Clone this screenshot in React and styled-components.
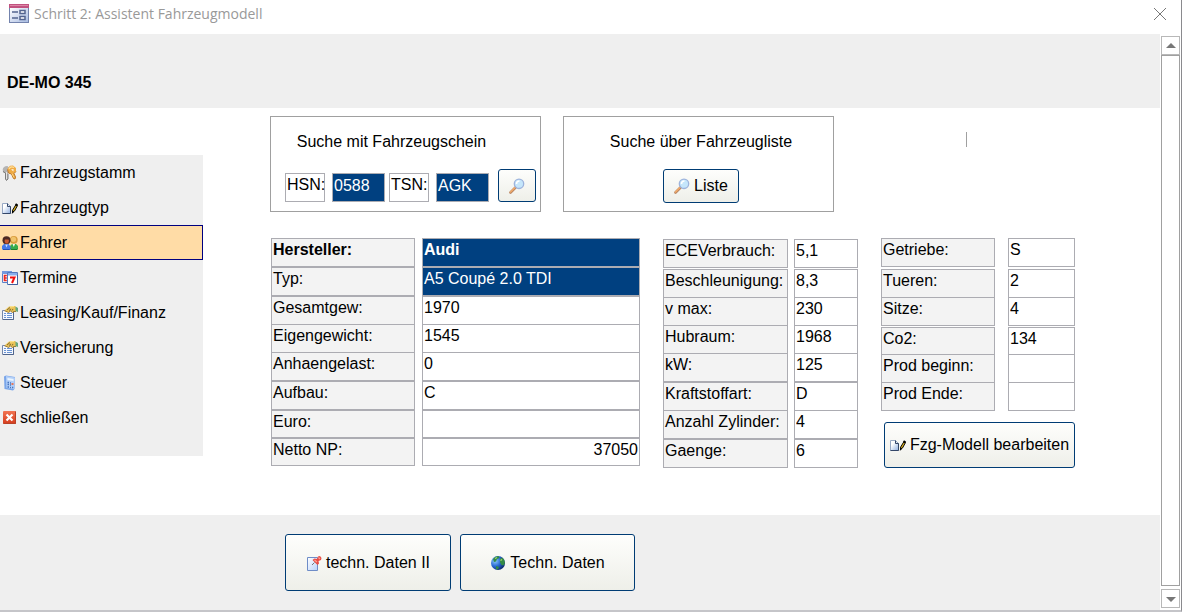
import React from 'react';
import styled, { createGlobalStyle, css } from 'styled-components';

const GlobalStyle = createGlobalStyle`
  *, *::before, *::after {
    box-sizing: border-box;
  }

  body {
    margin: 0;
    background: #ffffff;
    color: #000000;
    font: 16px/20px "Liberation Sans", Arial, sans-serif;
  }

  button, input {
    font: inherit;
    color: inherit;
  }
`;

const Window = styled.div`
  display: flex;
  flex-direction: column;
  min-height: 100vh;
  border-right: 1px solid #8a8a8e;
  border-bottom: 2px solid #c5c5c9;
`;

const TitleBar = styled.header`
  display: flex;
  align-items: center;
  height: 34px;
  padding: 0 14px 6px 9px;
  color: #999999;
  font: 14px/20px "Open Sans", "Noto Sans", sans-serif;
`;

const Title = styled.span`
  flex: 1;
  margin-left: 5px;
`;

const CloseButton = styled.button`
  display: flex;
  padding: 0;
  border: 0;
  background: none;
`;

const Viewport = styled.div`
  display: flex;
  flex: 1;
`;

const Page = styled.div`
  display: flex;
  flex: 1;
  flex-direction: column;
`;

const PageHeader = styled.div`
  height: 74px;
  padding: 39px 7px 0;
  background: #efefef;
`;

const Plate = styled.h1`
  margin: 0;
  font-size: 16px;
  line-height: 20px;
`;

const PageBody = styled.div`
  display: flex;
  align-items: flex-start;
  gap: 67px;
  padding-bottom: 47px;
`;

const Sidebar = styled.nav`
  flex: none;
  width: 203px;
  margin-top: 47px;
  padding-bottom: 21px;
  background: #efefef;
`;

const NavItem = styled.button`
  display: flex;
  align-items: center;
  gap: 2px;
  width: 100%;
  height: 35px;
  padding: 0 2px;
  border: 1px solid ${({ $active }) => ($active ? '#000080' : 'transparent')};
  border-left: 0;
  background: ${({ $active }) => ($active ? '#ffdca6' : 'transparent')};
  text-align: left;
`;

const Content = styled.main`
  flex: 1;
  padding-top: 8px;
`;

const SearchRow = styled.div`
  display: flex;
  gap: 22px;
`;

const SearchBox = styled.section`
  display: flex;
  flex-direction: column;
  width: 271px;
  height: 96px;
  padding: 15px 4px 0 ${({ $indent }) => $indent}px;
  border: 1px solid #a0a0a0;
`;

const SearchTitle = styled.h2`
  margin: 0;
  padding-right: ${({ $shift }) => ($shift ? '38px' : '0')};
  font-size: 16px;
  font-weight: normal;
  text-align: center;
`;

const SearchFields = styled.div`
  display: flex;
  align-items: flex-end;
  justify-content: ${({ $center }) => ($center ? 'center' : 'space-between')};
  margin-top: 17px;
`;

const FieldGroup = styled.div`
  display: flex;
  gap: 4px;
`;

const FieldPair = styled.div`
  display: flex;
  gap: 7px;
`;

const fieldBox = css`
  height: 29px;
  padding: 0 1px 4px;
  border: 1px solid #acacb2;
`;

const SearchLabel = styled.label`
  ${fieldBox}
  width: 40px;
  line-height: 22px;
`;

const SearchInput = styled.input`
  ${fieldBox}
  width: 53px;
  background: #004080;
  color: #ffffff;
`;

const Divider = styled.div`
  width: 1px;
  height: 15px;
  margin: 16px 0 0 110px;
  background: #a0a0a0;
`;

const ActionButton = styled.button`
  display: flex;
  align-items: center;
  justify-content: center;
  gap: 4px;
  width: ${({ $width }) => $width}px;
  height: ${({ $height }) => $height}px;
  padding: 0;
  border: 1px solid #003c74;
  border-radius: 3px;
  background: linear-gradient(#fefefc, #eeefe9);
  white-space: nowrap;
`;

const Specs = styled.div`
  display: flex;
  gap: 23px;
  margin-top: 26px;
  padding-left: 1px;
`;

const SpecColumn = styled.div`
  display: flex;
  flex-direction: column;
`;

const SpecRow = styled.div`
  display: grid;
  grid-template-columns: ${({ $columns }) => $columns};
  column-gap: ${({ $gap }) => $gap}px;
  height: ${({ $short }) => ($short ? 28 : 29)}px;
  margin-top: ${({ $space }) => $space}px;
  font-weight: ${({ $bold }) => ($bold ? 'bold' : 'normal')};
`;

const SpecLabel = styled.label`
  padding: 0 1px;
  border: 1px solid #acacb2;
  background: #f3f3f3;
  line-height: 22px;
  white-space: nowrap;
`;

const SpecInput = styled.input`
  width: 100%;
  min-width: 0;
  height: 100%;
  padding: 0 1px 5px;
  border: 1px solid #acacb2;
  background: ${({ $marked }) => ($marked ? '#004080' : '#ffffff')};
  color: ${({ $marked }) => ($marked ? '#ffffff' : '#000000')};
  font-weight: inherit;
  text-align: ${({ $right }) => ($right ? 'right' : 'left')};
`;

const EditAction = styled.div`
  display: flex;
  justify-content: flex-end;
  margin-top: 11px;
`;

const PageFooter = styled.footer`
  display: flex;
  flex: 1;
  align-items: flex-start;
  gap: 9px;
  padding: 19px 285px;
  background: #efefef;
`;

const ScrollBar = styled.div`
  display: flex;
  flex: none;
  flex-direction: column;
  width: 21px;
  padding: 2px 1px;
`;

const ScrollButton = styled.button`
  display: flex;
  align-items: center;
  justify-content: center;
  height: 19px;
  padding: 0;
  border: 1px solid #b8b8b8;
  background: #ffffff;
`;

const ScrollThumb = styled.div`
  flex: 1;
  margin-bottom: 3px;
  border: 1px solid #a0a0a0;
`;

const Icon = ({ size = 16, children }) => (
  <svg width={size} height={size} viewBox={`0 0 ${size} ${size}`} aria-hidden="true">
    {children}
  </svg>
);

const FormIcon = () => (
  <Icon size={20}>
    <defs>
      <linearGradient id="formBody" x1="0" y1="0" x2="1" y2="1">
        <stop offset="0" stopColor="#ffffff" />
        <stop offset="1" stopColor="#a9bce2" />
      </linearGradient>
    </defs>
    <path d="M0 0h20v19H0z" fill="#7383ad" />
    <path d="M1 4h18v14H1z" fill="url(#formBody)" />
    <path d="M0 0h20v4H0z" fill="#c2527f" />
    <path d="M1 1h18v1H1z" fill="#dc86a6" />
    <path d="M3 8h6M3 14h6" stroke="#53648f" strokeWidth="1.5" />
    <path d="M11 6.5h5v3h-5zM11 12.5h5v3h-5z" fill="#ffffff" stroke="#53648f" strokeWidth="1.5" />
  </Icon>
);

const KeysIcon = () => (
  <Icon>
    <path d="M.7 4.500C1 2 3 .8 5.500 1L7 3v4L6 9v5l-1.500 1.500L3.500 14V8.500L1 7z" fill="#b4b4b4" />
    <path d="M1 6.500 3.500 8v6l1 1.500L6 14V9" fill="none" stroke="#7c7c7c" />
    <path d="M4.500 7v7" stroke="#e4e4e4" />
    <path d="M5.500 3.500 8 .8l3-.3 3 2.500v3.500L12 8.500l1.500 3.500-.5 2-1.500-.5-2-4.500-3-1z" fill="#efab45" />
    <path d="m5.500 4.500 1 3.500 3 1 2 4.500 1.500.5.5-2L12 8.500l2-2" fill="none" stroke="#bd782b" />
    <path d="M7 4c1-2 3-2.500 5-1.500" fill="none" stroke="#ffdf9b" strokeWidth="1.300" />
    <path d="M9 4.500 11.500 4v2.500z" fill="#fff6e4" />
    <path d="m10 8.500 2 4" stroke="#ffd27c" />
  </Icon>
);

const EditIcon = () => (
  <Icon>
    <defs>
      <linearGradient id="editPage" x1="0" y1="0" x2="1" y2="1">
        <stop offset="0.300" stopColor="#ffffff" />
        <stop offset="1" stopColor="#8eaee0" />
      </linearGradient>
    </defs>
    <path d="M.5 3.500h5l3 3v7h-8z" fill="url(#editPage)" stroke="#97a8c4" />
    <path d="M5.500 3.500v3h3v7h-8" fill="none" stroke="#334668" />
    <path d="m10.500 12.500.2-2.500L14 4.500l1.500 1L12.500 11z" fill="#e5b91e" stroke="#000000" />
    <path d="m9.800 14 .5-3.500 2 1z" fill="#000000" />
    <path d="m13.500 4.200 2 1.200" stroke="#000000" strokeWidth="2" />
  </Icon>
);

const UsersIcon = () => (
  <Icon>
    <path d="M8 14.500V11l2-2h4l2 2v3l-1 1H9z" fill="#37ab4b" />
    <path d="M9 14.500h6l.7-1" fill="none" stroke="#1f7c31" />
    <circle cx="11.800" cy="4.800" r="3.900" fill="#d99c3d" />
    <circle cx="11.500" cy="4.300" r="2.600" fill="#f1c36b" />
    <path d="m10.500 9 1.300 3L13 9z" fill="#f1fff2" />
    <path d="M0 14v-3l2-2h4.500l2 2.500V14l-1 1H1z" fill="#4478e8" />
    <path d="M1 14.500h6.500l1-1" fill="none" stroke="#274eae" />
    <circle cx="4.500" cy="5.300" r="4" fill="#4b2923" />
    <path d="M3 4.500h3.500L7 6 6 8.500H3.500L2.500 6z" fill="#cb5a30" />
    <path d="m3.200 9.500 1.300 3 1.300-3z" fill="#c8dcff" />
  </Icon>
);

const CalendarIcon = () => (
  <Icon>
    <path d="M.5 1.500h9v11h-9z" fill="#f8fbff" stroke="#5b80c7" />
    <path d="M0 1h10v3H0z" fill="#7399df" />
    <path d="M4.800 5.500H2.500v2.500h2.300M2.500 8v2.500h2.300" fill="none" stroke="#ee2920" strokeWidth="1.600" />
    <path d="M5.500 2.500h10v12h-10z" fill="#ffffff" stroke="#5578bd" />
    <path d="M6 3h9v2.500H6z" fill="#88aeec" />
    <path d="M15.500 5v9.500h-9" stroke="#3f5e9c" fill="none" />
    <path d="M8 7.500h4.500L10 13" fill="none" stroke="#f01010" strokeWidth="2" />
  </Icon>
);

const PropertiesIcon = () => (
  <Icon>
    <path d="M.5 5.500h11v9H.5z" fill="#f5f8ff" stroke="#7587a8" />
    <path d="M2 8.500h2M5 8.500h5M2 10.500h2M5 10.500h5M2 12.500h2M5 12.500h5" stroke="#6993d3" />
    <path d="M11.500 6v8.500H1" fill="none" stroke="#50658c" />
    <path d="M2.500 5.500 7 1.500l6-.5 1.500 1.500v4L12 6.500l-1.500 1L8.500 6l-2 1.500L5 6.500z" fill="#eac257" />
    <path d="m2.500 5.800 2.500.9 1.500.8 2-1.500 2 1.500 1.500-1h2" fill="none" stroke="#9c7b35" />
    <path d="m5 5 3-2.500M7 5.500 9 4m1 1.500L11 4" stroke="#836e38" />
    <path d="m8 2 4-.5" stroke="#ffe894" />
    <path d="M13.500 1.500 16 3v4l-2.500-1z" fill="#66a780" />
  </Icon>
);

const CalculatorIcon = () => (
  <Icon>
    <path d="M2 1.500 4 .5l9 1.500-.5 12-1.500 1.500L2.500 14z" fill="#79a5e9" />
    <path d="M4 1 13 2.500 12 14l-7.500-1z" fill="#b4d0f8" />
    <path d="m5.500 3 6 1v2l-6-1z" fill="#eaf5ff" />
    <path d="M5.500 7.500H7m1 .5h1M5.500 9.500H7m1 .5h1m-3.500 2H7m1 .5h1m1 0h1.300" stroke="#4674bf" strokeWidth="1.300" />
    <path d="M9.500 8h2v2h-2z" fill="#e47758" />
  </Icon>
);

const ExitIcon = () => (
  <Icon>
    <defs>
      <linearGradient id="exitFill" x1="0" y1="0" x2="0" y2="1">
        <stop offset="0" stopColor="#f27554" />
        <stop offset="1" stopColor="#d43b1c" />
      </linearGradient>
    </defs>
    <rect x="1" y="1" width="13" height="13" rx="1" fill="url(#exitFill)" />
    <path d="M1.500 13.500h12v-12" fill="none" stroke="#b94126" />
    <path d="m4.500 4.500 6 6m0-6-6 6" stroke="#ffffff" strokeWidth="2.200" />
  </Icon>
);

const SearchIcon = () => (
  <Icon>
    <path d="m6.500 9.500-5 5" stroke="#b98562" strokeWidth="2.600" strokeLinecap="round" />
    <path d="m6 9.500-4.500 4.500" stroke="#f2ab6a" strokeWidth="1.500" strokeLinecap="round" />
    <circle cx="10" cy="5.800" r="4.700" fill="#c5e6fb" stroke="#9db3dc" strokeWidth="1.300" />
    <path d="M7.500 6c0-2 1.500-3 3-3" fill="none" stroke="#ffffff" strokeWidth="1.500" />
  </Icon>
);

const PinnedPageIcon = () => (
  <Icon>
    <defs>
      <linearGradient id="pinPage" x1="0" y1="0" x2="1" y2="1">
        <stop offset="0" stopColor="#ffffff" />
        <stop offset="1" stopColor="#b9d3fb" />
      </linearGradient>
    </defs>
    <path d="M1.500 2.500h10v13h-10z" fill="url(#pinPage)" stroke="#6e8cc7" />
    <path d="m6 10 2.500-2.500" stroke="#777777" />
    <path d="m6.500 5 2-1.500 2.500.5 1-2.500 2-.5 1.500 2L15 5l-2.500 1 .5 2.500-1.500 1.500z" fill="#e84b43" />
    <path d="m8.500 5 2.500 2m1.500-4.500L14 4" stroke="#ff9b91" strokeWidth="1.300" />
  </Icon>
);

const GlobeIcon = () => (
  <Icon>
    <defs>
      <radialGradient id="globeFill" cx="0.300" cy="0.350" r="0.750">
        <stop offset="0" stopColor="#8fc9fb" />
        <stop offset="0.500" stopColor="#2b6bd4" />
        <stop offset="1" stopColor="#0a2468" />
      </radialGradient>
    </defs>
    <circle cx="8" cy="8" r="7" fill="url(#globeFill)" />
    <path d="m3 4 2.500-2.300L8.500 1l1 2-2.500 1-1 2.500-2 .5zM10 4l2-1.500 2 2 1 3.500-1.500 2.500-2-.5L10 7.500zM6 11l3 1-1 2.500-2-.5z" fill="#348b46" />
    <path d="m5 3.500 2-1m3.500 3 1.500-1" stroke="#a6d970" strokeWidth="1.300" />
  </Icon>
);

const navItems = [
  { label: 'Fahrzeugstamm', icon: KeysIcon },
  { label: 'Fahrzeugtyp', icon: EditIcon },
  { label: 'Fahrer', icon: UsersIcon, active: true },
  { label: 'Termine', icon: CalendarIcon },
  { label: 'Leasing/Kauf/Finanz', icon: PropertiesIcon },
  { label: 'Versicherung', icon: PropertiesIcon },
  { label: 'Steuer', icon: CalculatorIcon },
  { label: 'schließen', icon: ExitIcon },
];

// space: distance to the row above, -1 shares the border line
const modelRows = [
  { id: 'hersteller', label: 'Hersteller:', value: 'Audi', space: 0, bold: true, marked: true },
  { id: 'typ', label: 'Typ:', value: 'A5 Coupé 2.0 TDI', space: 0, marked: true },
  { id: 'gesamtgew', label: 'Gesamtgew:', value: '1970', space: 0 },
  { id: 'eigengewicht', label: 'Eigengewicht:', value: '1545', space: -1 },
  { id: 'anhaengelast', label: 'Anhaengelast:', value: '0', space: -1 },
  { id: 'aufbau', label: 'Aufbau:', value: 'C', space: 0 },
  { id: 'euro', label: 'Euro:', value: '', space: 0, short: true },
  { id: 'netto', label: 'Netto NP:', value: '37050', space: 0, short: true, right: true },
];

const engineRows = [
  { id: 'verbrauch', label: 'ECEVerbrauch:', value: '5,1', space: 1 },
  { id: 'beschleunigung', label: 'Beschleunigung:', value: '8,3', space: 1 },
  { id: 'vmax', label: 'v max:', value: '230', space: -1 },
  { id: 'hubraum', label: 'Hubraum:', value: '1968', space: -1 },
  { id: 'kw', label: 'kW:', value: '125', space: -1 },
  { id: 'kraftstoff', label: 'Kraftstoffart:', value: 'D', space: 0 },
  { id: 'zylinder', label: 'Anzahl Zylinder:', value: '4', space: -1 },
  { id: 'gaenge', label: 'Gaenge:', value: '6', space: 0 },
];

const bodyRows = [
  { id: 'getriebe', label: 'Getriebe:', value: 'S', space: 0 },
  { id: 'tueren', label: 'Tueren:', value: '2', space: 2 },
  { id: 'sitze', label: 'Sitze:', value: '4', space: -1 },
  { id: 'co2', label: 'Co2:', value: '134', space: 1, short: true },
  { id: 'beginn', label: 'Prod beginn:', value: '', space: -1 },
  { id: 'ende', label: 'Prod Ende:', value: '', space: -1 },
];

const SpecList = ({ rows, columns, gap, children }) => (
  <SpecColumn>
    {rows.map((row) => (
      <SpecRow
        key={row.id}
        $columns={columns}
        $gap={gap}
        $space={row.space}
        $short={row.short}
        $bold={row.bold}
      >
        <SpecLabel htmlFor={row.id}>{row.label}</SpecLabel>
        <SpecInput id={row.id} defaultValue={row.value} $marked={row.marked} $right={row.right} />
      </SpecRow>
    ))}
    {children}
  </SpecColumn>
);

const App = () => {
  return (
    <>
      <GlobalStyle />
      <Window>
        <TitleBar>
          <FormIcon />
          <Title>Schritt 2: Assistent Fahrzeugmodell</Title>
          <CloseButton type="button" aria-label="Fenster schließen">
            <Icon size={14}>
              <path d="m1 1 12 12M13 1 1 13" stroke="#777777" />
            </Icon>
          </CloseButton>
        </TitleBar>
        <Viewport>
          <Page>
            <PageHeader>
              <Plate>DE-MO 345</Plate>
            </PageHeader>
            <PageBody>
              <Sidebar>
                {navItems.map(({ label, icon: NavIcon, active }) => (
                  <NavItem key={label} type="button" $active={active}>
                    <NavIcon />
                    {label}
                  </NavItem>
                ))}
              </Sidebar>
              <Content>
                <SearchRow>
                  <SearchBox $indent={14}>
                    <SearchTitle $shift>Suche mit Fahrzeugschein</SearchTitle>
                    <SearchFields>
                      <FieldGroup>
                        <FieldPair>
                          <SearchLabel htmlFor="hsn">HSN:</SearchLabel>
                          <SearchInput id="hsn" defaultValue="0588" />
                        </FieldPair>
                        <FieldPair>
                          <SearchLabel htmlFor="tsn">TSN:</SearchLabel>
                          <SearchInput id="tsn" defaultValue="AGK" />
                        </FieldPair>
                      </FieldGroup>
                      <ActionButton type="button" aria-label="Suchen" $width={38} $height={33}>
                        <SearchIcon />
                      </ActionButton>
                    </SearchFields>
                  </SearchBox>
                  <SearchBox $indent={9}>
                    <SearchTitle>Suche über Fahrzeugliste</SearchTitle>
                    <SearchFields $center>
                      <ActionButton type="button" $width={76} $height={34}>
                        <SearchIcon />
                        Liste
                      </ActionButton>
                    </SearchFields>
                  </SearchBox>
                  <Divider />
                </SearchRow>
                <Specs>
                  <SpecList rows={modelRows} columns="144px 218px" gap={7} />
                  <SpecList rows={engineRows} columns="125px 64px" gap={6} />
                  <SpecList rows={bodyRows} columns="114px 67px" gap={13}>
                    <EditAction>
                      <ActionButton type="button" $width={191} $height={46}>
                        <EditIcon />
                        Fzg-Modell bearbeiten
                      </ActionButton>
                    </EditAction>
                  </SpecList>
                </Specs>
              </Content>
            </PageBody>
            <PageFooter>
              <ActionButton type="button" $width={166} $height={57}>
                <PinnedPageIcon />
                techn. Daten II
              </ActionButton>
              <ActionButton type="button" $width={175} $height={57}>
                <GlobeIcon />
                Techn. Daten
              </ActionButton>
            </PageFooter>
          </Page>
          <ScrollBar>
            <ScrollButton type="button" aria-label="Nach oben">
              <Icon size={10}>
                <path d="m5 2 5 5H0z" fill="#777777" />
              </Icon>
            </ScrollButton>
            <ScrollThumb />
            <ScrollButton type="button" aria-label="Nach unten">
              <Icon size={10}>
                <path d="M0 3h10L5 8z" fill="#777777" />
              </Icon>
            </ScrollButton>
          </ScrollBar>
        </Viewport>
      </Window>
    </>
  );
};

export default App;
